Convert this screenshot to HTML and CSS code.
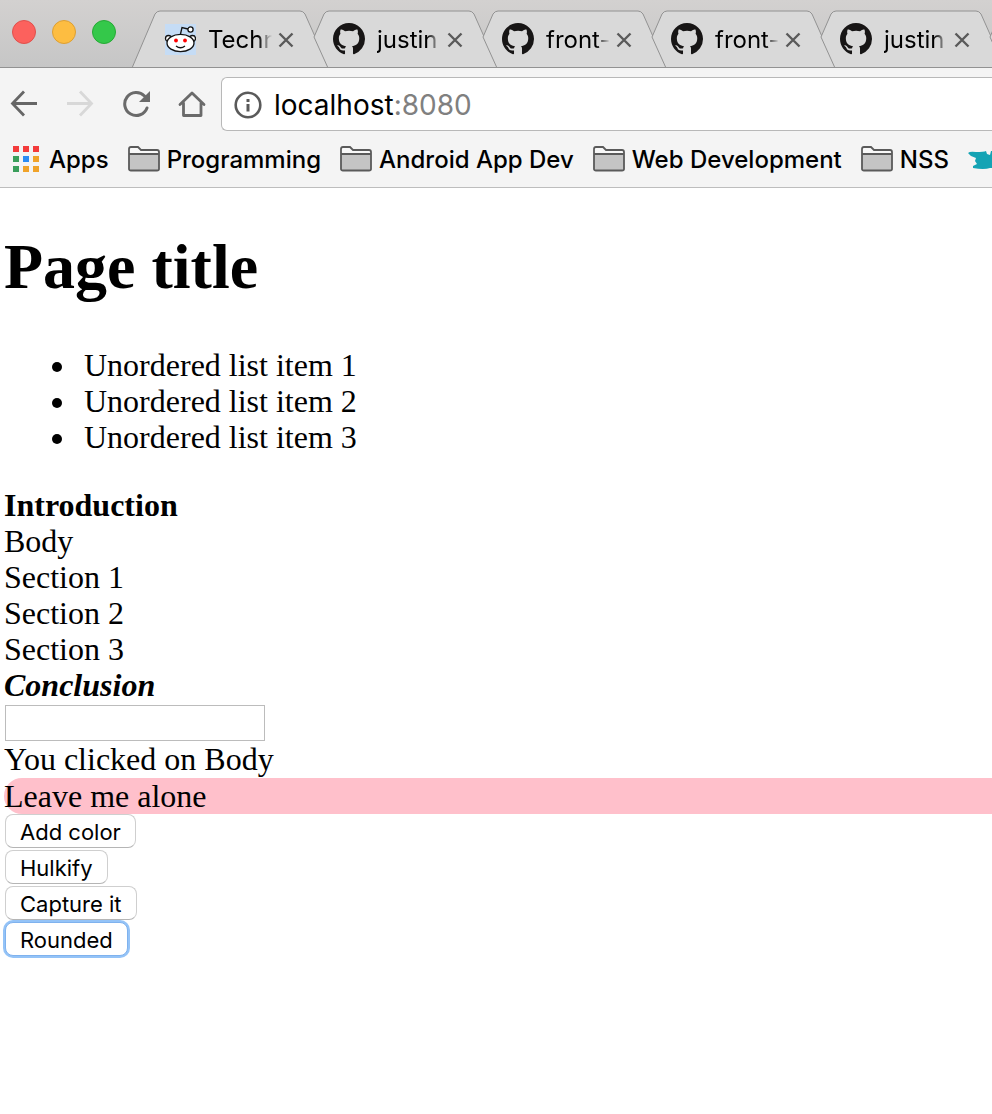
FILE: index.html
```html
<!DOCTYPE html>
<html lang="en">
<head>
<meta charset="utf-8">
<title>Page title</title>
<link rel="stylesheet" href="styles.css">
</head>
<body>
<svg class="defs" width="0" height="0" aria-hidden="true">
  <symbol id="tab-first" viewBox="0 0 198 58"><path d="M0 58 23 4Q25 1 28 1H168Q171 1 173 4L197 58" fill="#d9d9d9" stroke="#929292"/></symbol>
  <symbol id="tab-next" viewBox="0 0 198 58"><path d="M27 58 13 27 23 4Q25 1 28 1H168Q171 1 173 4L197 58" fill="#d9d9d9" stroke="#929292"/></symbol>
  <symbol id="github" viewBox="0 0 16 16"><path fill="#171515" d="M8 0C3.58 0 0 3.58 0 8c0 3.54 2.29 6.53 5.47 7.59.4.07.55-.17.55-.38 0-.19-.01-.82-.01-1.49-2.01.37-2.53-.49-2.69-.94-.09-.23-.48-.94-.82-1.13-.28-.15-.68-.52-.01-.53.63-.01 1.08.58 1.23.82.72 1.21 1.87.87 2.33.66.07-.52.28-.87.51-1.07-1.78-.2-3.64-.89-3.64-3.95 0-.87.31-1.59.82-2.15-.08-.2-.36-1.02.08-2.12 0 0 .67-.21 2.2.82.64-.18 1.32-.27 2-.27s1.36.09 2 .27c1.53-1.04 2.2-.82 2.2-.82.44 1.1.16 1.92.08 2.12.51.56.82 1.27.82 2.15 0 3.07-1.87 3.75-3.65 3.95.29.25.54.73.54 1.48 0 1.07-.01 1.93-.01 2.2 0 .21.15.46.55.38A8.01 8.01 0 0 0 16 8c0-4.42-3.58-8-8-8z"/></symbol>
  <symbol id="close" viewBox="0 0 24 24"><path d="M5.500 6.500 18.500 19.500M18.500 6.500 5.500 19.500" stroke="#5a5a5a" stroke-width="2.400" fill="none"/></symbol>
  <symbol id="folder" viewBox="0 0 32 28"><path d="M1 24V3Q1 1 3 1H10L13 4H29Q31 4 31 6V24Z" fill="#f8f8f8"/><path d="M1 8H31V24H1Z" fill="#c4c4c4"/><path d="M1 8H31M1 23V3Q1 1 3 1H10L13 4H29Q31 4 31 6V23Q31 24.500 29 24.500H3Q1 24.500 1 23Z" fill="none" stroke="#5a5a5a" stroke-width="1.800"/></symbol>
</svg>

<header class="browser">
  <div class="tabstrip">
    <div class="lights">
      <button class="light light-close" aria-label="Close window"></button>
      <button class="light light-min" aria-label="Minimize window"></button>
      <button class="light light-max" aria-label="Zoom window"></button>
    </div>
    <div class="tab">
      <svg class="tab-shape" aria-hidden="true"><use href="#tab-first"/></svg>
      <svg class="favicon" viewBox="0 0 32 32" aria-hidden="true">
        <rect x="1" y="1" width="31" height="31" fill="#c5dcf5"/>
        <g fill="#fff" stroke="#111" stroke-width="1.300">
          <path d="M16.500 11 18 4.500 24 6" fill="none"/><circle cx="26.500" cy="6.500" r="2.600"/>
          <circle cx="4.500" cy="15.500" r="3"/><circle cx="28.500" cy="15.500" r="3"/>
          <ellipse cx="16.500" cy="20" rx="13.500" ry="8.700"/>
          <path d="M12 23Q16.500 26.500 21 23" fill="none"/>
        </g>
        <circle cx="12" cy="17.500" r="1.900" fill="#f00"/><circle cx="21" cy="17.500" r="1.900" fill="#f00"/>
      </svg>
      <span class="tab-title">Techn</span>
      <button class="tab-close" aria-label="Close tab"><svg viewBox="0 0 24 24"><use href="#close"/></svg></button>
    </div>
    <div class="tab">
      <svg class="tab-shape" aria-hidden="true"><use href="#tab-next"/></svg>
      <svg class="favicon" aria-hidden="true"><use href="#github"/></svg>
      <span class="tab-title">justin</span>
      <button class="tab-close" aria-label="Close tab"><svg viewBox="0 0 24 24"><use href="#close"/></svg></button>
    </div>
    <div class="tab">
      <svg class="tab-shape" aria-hidden="true"><use href="#tab-next"/></svg>
      <svg class="favicon" aria-hidden="true"><use href="#github"/></svg>
      <span class="tab-title">front-</span>
      <button class="tab-close" aria-label="Close tab"><svg viewBox="0 0 24 24"><use href="#close"/></svg></button>
    </div>
    <div class="tab">
      <svg class="tab-shape" aria-hidden="true"><use href="#tab-next"/></svg>
      <svg class="favicon" aria-hidden="true"><use href="#github"/></svg>
      <span class="tab-title">front-</span>
      <button class="tab-close" aria-label="Close tab"><svg viewBox="0 0 24 24"><use href="#close"/></svg></button>
    </div>
    <div class="tab">
      <svg class="tab-shape" aria-hidden="true"><use href="#tab-next"/></svg>
      <svg class="favicon" aria-hidden="true"><use href="#github"/></svg>
      <span class="tab-title">justin</span>
      <button class="tab-close" aria-label="Close tab"><svg viewBox="0 0 24 24"><use href="#close"/></svg></button>
    </div>
    <div class="tab" aria-hidden="true">
      <svg class="tab-shape"><use href="#tab-next"/></svg>
    </div>
  </div>

  <div class="toolbar">
    <nav class="nav" aria-label="Browser navigation">
      <button class="nav-button" aria-label="Back"><svg viewBox="0 0 28 28"><path d="M27 13.500H3M14 1.500 2.500 13.500 14 25.500" fill="none" stroke="#666" stroke-width="2.800"/></svg></button>
      <button class="nav-button" aria-label="Forward" disabled><svg viewBox="0 0 28 28"><path d="M1 13.500H25M14 1.500 25.500 13.500 14 25.500" fill="none" stroke="#d8d8d8" stroke-width="2.800"/></svg></button>
      <button class="nav-button" aria-label="Reload"><svg viewBox="0 0 28 28"><path d="M25 18A11.500 11.500 0 1 1 22.500 6" fill="none" stroke="#6a6a6a" stroke-width="3" stroke-linecap="round"/><path d="M28 1V12H17Z" fill="#6a6a6a"/></svg></button>
      <button class="nav-button" aria-label="Home"><svg viewBox="0 0 28 28"><path d="M2 14.500 14 3 26 14.500M5.500 13V25.500H23V13" fill="none" stroke="#6a6a6a" stroke-width="2.800" stroke-linecap="round" stroke-linejoin="round"/></svg></button>
    </nav>
    <div class="omnibox">
      <svg class="info" viewBox="0 0 28 28" aria-hidden="true"><circle cx="14" cy="14" r="12.300" fill="none" stroke="#5a5a5a" stroke-width="2.600"/><path d="M12.500 8H15.500V11H12.500ZM12.500 13H15.500V20.500H12.500Z" fill="#5a5a5a"/></svg>
      <div class="url" role="textbox" contenteditable="true" spellcheck="false" aria-label="Address">localhost<span class="port">:8080</span></div>
    </div>
  </div>

  <nav class="bookmarks" aria-label="Bookmarks">
    <a class="bookmark apps" href="#">
      <svg class="apps-icon" viewBox="0 0 26 28" aria-hidden="true"><path fill="#f33b3b" d="M0 0h6v6H0zM10 0h6v6h-6zM20 0h6v6h-6z"/><path fill="#3a9e5b" d="M0 10h6v6H0zM0 20h6v6H0z"/><path fill="#2a8cf4" d="M10 10h6v6h-6z"/><path fill="#f0a32a" d="M20 10h6v6h-6zM10 20h6v6h-6zM20 20h6v6h-6z"/></svg>
      Apps</a>
    <a class="bookmark" href="#"><svg class="folder" aria-hidden="true"><use href="#folder"/></svg>Programming</a>
    <a class="bookmark" href="#"><svg class="folder" aria-hidden="true"><use href="#folder"/></svg>Android App Dev</a>
    <a class="bookmark" href="#"><svg class="folder" aria-hidden="true"><use href="#folder"/></svg>Web Development</a>
    <a class="bookmark" href="#"><svg class="folder" aria-hidden="true"><use href="#folder"/></svg>NSS</a>
    <a class="bookmark" href="#" aria-label="Bookmark"><svg class="folder" viewBox="0 0 32 28" aria-hidden="true"><path d="M0 7Q2 5 8 6Q16 6 18 5L19 8 22 9 23 5H32V22H22Q16 24 5 22L5 20 9 18 7 15 8 12 3 10Z" fill="#14a3b4"/></svg></a>
  </nav>
</header>

<main class="page">
  <h1 class="title">Page title</h1>
  <ul class="list">
    <li class="item">Unordered list item 1</li>
    <li class="item">Unordered list item 2</li>
    <li class="item">Unordered list item 3</li>
  </ul>
  <div class="intro">Introduction</div>
  <div>Body</div>
  <div>Section 1</div>
  <div>Section 2</div>
  <div>Section 3</div>
  <div class="conclusion">Conclusion</div>
  <input class="field" type="text" aria-label="Text">
  <div>You clicked on Body</div>
  <div class="pink">Leave me alone</div>
  <div class="actions">
    <button class="action">Add color</button>
    <button class="action">Hulkify</button>
    <button class="action">Capture it</button>
    <button class="action action-focused">Rounded</button>
  </div>
</main>
</body>
</html>
```

FILE: styles.css
```css
* { box-sizing: border-box; }

body {
  margin: 0;
  background: #fff;
  color: #000;
}

button {
  font-family: inherit;
  padding: 0;
  border: 0;
  background: none;
}

svg { display: block; }
.defs { position: absolute; }

.browser {
  font-family: Inter, "Liberation Sans", sans-serif;
  font-size: 24px;
  background: #f4f4f4;
  border-bottom: 1px solid #bdbdbd;
}

.tabstrip {
  display: flex;
  height: 68px;
  padding-top: 10px;
  overflow: hidden;
  background: linear-gradient(#d3d1d0, #c6c6c6);
  border-bottom: 1px solid #929292;
}

.lights {
  display: flex;
  flex: none;
  gap: 16px;
  width: 159px;
  padding: 10px 0 0 12px;
}

.light {
  width: 24px;
  height: 24px;
  border: 1px solid;
  border-radius: 50%;
}
.light-close { background: #fc615d; border-color: #e0504c; }
.light-min { background: #fdbd41; border-color: #dd9f33; }
.light-max { background: #34c84a; border-color: #26a935; }

.tab {
  position: relative;
  display: flex;
  flex: none;
  align-items: center;
  width: 196px;
  height: 58px;
  margin-left: -27px;
  padding-left: 32px;
}

.tab-shape {
  position: absolute;
  top: 0;
  left: 0;
  width: 198px;
  height: 58px;
}

.favicon {
  position: relative;
  flex: none;
  width: 32px;
  height: 32px;
}

.tab-title {
  position: relative;
  width: 66px;
  margin-left: 12px;
  overflow: hidden;
  white-space: nowrap;
  mask-image: linear-gradient(to right, #000 50px, transparent 64px);
}

.tab-close {
  position: relative;
  width: 24px;
  height: 24px;
}

.toolbar {
  display: flex;
  align-items: center;
  height: 72px;
  padding-left: 10px;
}

.nav {
  display: flex;
  flex: none;
  gap: 28px;
  margin-right: 15px;
}

.nav-button {
  width: 28px;
  height: 28px;
}

.omnibox {
  display: flex;
  flex: 1;
  align-items: center;
  gap: 12px;
  height: 54px;
  padding: 2px 0 0 12px;
  background: #fff;
  border: 1px solid #b8b8b8;
  border-right: 0;
  border-radius: 6px 0 0 6px;
}

.info {
  width: 28px;
  height: 28px;
}

.url {
  flex: 1;
  font-size: 28px;
  outline: 0;
}
.port { color: #808080; }

.bookmarks {
  display: flex;
  align-items: center;
  gap: 19px;
  height: 47px;
  padding: 0 0 8px 13px;
  overflow: hidden;
  font-weight: 500;
}

.bookmark {
  display: flex;
  flex: none;
  align-items: center;
  gap: 7px;
  color: #000;
  text-decoration: none;
  white-space: nowrap;
}
.apps { gap: 10px; }
.apps-icon { width: 26px; height: 28px; }
.folder { width: 32px; height: 28px; }

.page {
  padding: 0 0 32px 4px;
  font-family: "Liberation Serif", "Times New Roman", serif;
  font-size: 32px;
  line-height: 36px;
}

.title {
  margin: 42px 0 43px;
  font-size: 64px;
  line-height: 74px;
}

.list {
  margin: 0 0 32px;
  padding-left: 74px;
}
.item { padding-left: 6px; }

.intro { font-weight: bold; }
.conclusion { font-weight: bold; font-style: italic; }

.field {
  display: block;
  width: 260px;
  height: 36px;
  margin: 2px 1px 0;
  padding: 0 6px;
  border: 1px solid #bcbcbc;
  font-size: 22px;
}

.pink {
  margin-top: 1px;
  background: #ffc0cb;
  border-radius: 20px 0 0 20px;
}

.actions {
  display: flex;
  flex-direction: column;
  align-items: flex-start;
  gap: 2px;
  padding-left: 1px;
  font-family: Inter, "Liberation Sans", sans-serif;
}

.action {
  height: 34px;
  padding: 1px 14px 0;
  background: #fff;
  border: 1px solid #cfcfcf;
  border-bottom-color: #b5b5b5;
  border-radius: 8px;
  color: #000;
  font-size: 22px;
  line-height: 32px;
}

.action-focused {
  border-color: #7fb2ee;
  box-shadow: 0 0 0 2px #94c3f7;
}
```
